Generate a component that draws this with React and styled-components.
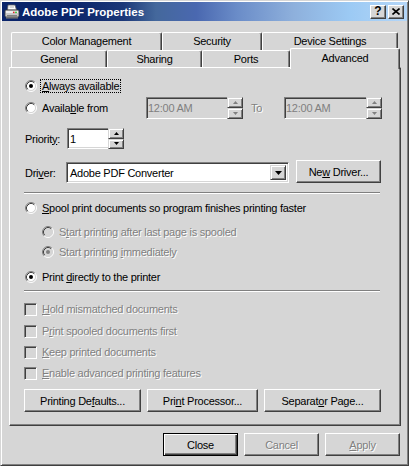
import React from "react";
import styled, { createGlobalStyle, css } from "styled-components";

const FACE = "#d6d6d6";
const LIGHT = "#ffffff";
const SHADOW = "#808080";
const DARK = "#404040";
const DIS = "#808080";

const GlobalStyle = createGlobalStyle`
  html, body { margin: 0; padding: 0; background: ${FACE}; }
  body {
    font-family: "Liberation Sans", Arial, sans-serif;
    font-size: 11px;
    letter-spacing: -0.25px;
    color: #000;
  }
  *, *::before, *::after { box-sizing: border-box; }
  u { text-underline-offset: 1px; }
`;

const Window = styled.div`
  width: 409px;
  height: 466px;
  background: ${FACE};
  border: 1px solid;
  border-color: ${FACE} ${DARK} ${DARK} ${FACE};
  box-shadow: inset 1px 1px ${LIGHT}, inset -1px -1px ${SHADOW};
  padding: 1px;
  display: flex;
  flex-direction: column;
`;

const TitleBar = styled.div`
  height: 19px;
  flex: none;
  display: flex;
  align-items: center;
  padding: 0 3px 0 2px;
  background: linear-gradient(
    to right,
    #0a246a 0%,
    #0a246a 17%,
    #1c3878 30%,
    #44689c 38%,
    #4a68b0 48%,
    #6a8cc8 58%,
    #8eb0dc 72%,
    #9ccaf4 86%,
    #b4d6f8 100%
  );
`;

const TitleText = styled.span`
  margin-left: 2px;
  color: #fff;
  font-weight: bold;
  font-size: 11.5px;
  letter-spacing: 0;
  white-space: nowrap;
`;

const CaptionButtons = styled.div`
  margin-left: auto;
  display: flex;
  gap: 2px;
`;

const CaptionButton = styled.div`
  width: 16px;
  height: 14px;
  background: ${FACE};
  border: 1px solid;
  border-color: ${LIGHT} ${DARK} ${DARK} ${LIGHT};
  box-shadow: inset -1px -1px ${SHADOW};
  display: flex;
  align-items: center;
  justify-content: center;
  font-weight: bold;
  font-size: 12px;
  letter-spacing: 0;
  line-height: 1;
  padding-bottom: 1px;
`;

const Body = styled.div`
  flex: 1;
  display: flex;
  flex-direction: column;
  padding: 11px 6px 0 7px;
`;

const TabStrip = styled.div`
  display: flex;
  flex-direction: column;
  padding-left: 2px;
`;

const TabRow = styled.div`
  display: flex;
  height: ${(p) => p.$h}px;
  flex: none;
`;

const Tab = styled.div`
  flex: none;
  width: ${(p) => p.$w}px;
  height: ${(p) => (p.$active ? 21 : p.$h)}px;
  margin-top: ${(p) => (p.$active ? -2 : 0)}px;
  background: ${FACE};
  border-top: 1px solid ${LIGHT};
  border-left: 1px solid ${LIGHT};
  border-right: 1px solid ${DARK};
  border-top-left-radius: 2px;
  border-top-right-radius: 2px;
  box-shadow: inset -1px 0 ${SHADOW};
  display: flex;
  align-items: center;
  justify-content: center;
  white-space: nowrap;
  padding-bottom: ${(p) => (p.$active ? 3 : 1)}px;
  position: relative;
  z-index: ${(p) => (p.$active ? 2 : 0)};
`;

const Panel = styled.div`
  width: 392px;
  height: 359px;
  flex: none;
  border-top: 1px solid ${LIGHT};
  border-left: 1px solid ${LIGHT};
  border-right: 1px solid ${DARK};
  border-bottom: 1px solid ${DARK};
  box-shadow: inset -1px -1px ${SHADOW};
  padding: 10px 19px 0 14px;
  display: flex;
  flex-direction: column;
`;

const Row = styled.div`
  flex: none;
  display: flex;
  align-items: ${(p) => p.$align || "center"};
  height: ${(p) => p.$h || 16}px;
  margin-top: ${(p) => p.$mt || 0}px;
  padding-left: ${(p) => p.$indent || 0}px;
  gap: ${(p) => p.$gap || 0}px;
`;

const Label = styled.span`
  flex: none;
  white-space: nowrap;
  color: ${(p) => (p.$disabled ? DIS : "#000")};
  text-shadow: ${(p) => (p.$disabled ? `1px 1px 0 ${LIGHT}` : "none")};
  ${(p) =>
    p.$width &&
    css`
      width: ${p.$width}px;
    `}
  ${(p) =>
    p.$pl &&
    css`
      padding-left: ${p.$pl}px;
    `}
  ${(p) =>
    p.$center &&
    css`
      align-self: center;
      padding-top: 2px;
    `}
`;

const FocusLabel = styled.span`
  flex: none;
  white-space: nowrap;
  margin-left: -2px;
  padding: 0 1px;
  border: 1px dotted #000;
  line-height: 12px;
`;

const RadioSvg = styled.svg`
  flex: none;
  width: 12px;
  height: 12px;
  margin: 0 5px 0 1px;
`;

const CheckBox = styled.span`
  flex: none;
  width: 13px;
  height: 13px;
  margin-right: 5px;
  background: ${FACE};
  border: 1px solid;
  border-color: ${SHADOW} ${LIGHT} ${LIGHT} ${SHADOW};
  box-shadow: inset 1px 1px ${DARK}, inset -1px -1px ${FACE};
`;

const SpinField = styled.div`
  flex: none;
  display: flex;
  width: ${(p) => p.$w}px;
  height: ${(p) => p.$h}px;
`;

const EditBox = styled.div`
  flex: 1;
  min-width: 0;
  display: flex;
  align-items: center;
  background: ${(p) => (p.$disabled ? FACE : "#fff")};
  border-top: 1px solid ${SHADOW};
  border-left: 1px solid ${SHADOW};
  border-bottom: 1px solid ${LIGHT};
  box-shadow: inset 1px 1px ${DARK}, inset 0 -1px ${FACE};
  padding-left: ${(p) => p.$pl || 2}px;
  color: ${(p) => (p.$disabled ? DIS : "#000")};
  white-space: nowrap;
`;

const Spinner = styled.div`
  flex: none;
  width: 16px;
  display: flex;
  flex-direction: column;
`;

const SpinButton = styled.div`
  flex: 1;
  background: ${FACE};
  border: 1px solid;
  border-color: ${FACE} ${DARK} ${DARK} ${FACE};
  box-shadow: inset 1px 1px ${LIGHT}, inset -1px -1px ${SHADOW};
  display: flex;
  align-items: center;
  justify-content: center;
`;

const Combo = styled.div`
  flex: none;
  width: ${(p) => p.$w}px;
  height: 21px;
  display: flex;
  background: #fff;
  border: 1px solid;
  border-color: ${SHADOW} ${LIGHT} ${LIGHT} ${SHADOW};
  box-shadow: inset 1px 1px ${DARK}, inset -1px -1px ${FACE};
  padding: 2px;
`;

const ComboText = styled.div`
  flex: 1;
  display: flex;
  align-items: center;
  padding-left: 1px;
  white-space: nowrap;
`;

const DropButton = styled.div`
  flex: none;
  width: 16px;
  background: ${FACE};
  border: 1px solid;
  border-color: ${FACE} ${DARK} ${DARK} ${FACE};
  box-shadow: inset 1px 1px ${LIGHT}, inset -1px -1px ${SHADOW};
  display: flex;
  align-items: center;
  justify-content: center;
`;

const ToLabel = styled.span`
  flex: none;
  width: 41px;
  padding-left: 8px;
  color: ${DIS};
  text-shadow: 1px 1px 0 ${LIGHT};
`;

const Separator = styled.div`
  flex: none;
  width: 356px;
  height: 2px;
  margin-top: ${(p) => p.$mt}px;
  border-top: 1px solid ${SHADOW};
  border-bottom: 1px solid ${LIGHT};
`;

const Button = styled.div`
  flex: none;
  width: ${(p) => p.$w}px;
  height: 23px;
  margin-left: ${(p) => p.$ml || 0}px;
  background: ${FACE};
  border: 1px solid;
  border-color: ${LIGHT} ${DARK} ${DARK} ${LIGHT};
  box-shadow: inset -1px -1px ${SHADOW};
  display: flex;
  align-items: center;
  justify-content: center;
  white-space: nowrap;
  color: ${(p) => (p.$disabled ? DIS : "#000")};
  text-shadow: ${(p) => (p.$disabled ? `1px 1px 0 ${LIGHT}` : "none")};
  ${(p) =>
    p.$default &&
    css`
      border-color: #000;
      box-shadow: inset 1px 1px ${LIGHT}, inset -1px -1px ${DARK},
        inset -2px -2px ${SHADOW};
    `}
`;

const ButtonRow = styled.div`
  flex: none;
  display: flex;
  justify-content: flex-end;
  gap: 6px;
  margin-top: 7px;
  padding-right: 1px;
`;

function RadioMark({ checked, disabled }) {
  return (
    <RadioSvg viewBox="0 0 12 12">
      <circle cx="6" cy="6" r="4.6" fill={disabled ? FACE : "#fff"} />
      <path d="M2.11 9.89A5.5 5.5 0 0 1 9.89 2.11" fill="none" stroke={SHADOW} />
      <path d="M9.89 2.11A5.5 5.5 0 0 1 2.11 9.89" fill="none" stroke={LIGHT} />
      <path d="M2.82 9.18A4.5 4.5 0 0 1 9.18 2.82" fill="none" stroke={DARK} />
      <path d="M9.18 2.82A4.5 4.5 0 0 1 2.82 9.18" fill="none" stroke={FACE} />
      {checked && (
        <circle cx="6" cy="6" r="2" fill={disabled ? SHADOW : "#000"} />
      )}
    </RadioSvg>
  );
}

function Arrow({ dir, color = "#000", size = "small" }) {
  if (size === "big") {
    return (
      <svg width="7" height="4" viewBox="0 0 7 4">
        <polygon points="0,0 7,0 3.5,4" fill={color} />
      </svg>
    );
  }
  return (
    <svg width="5" height="3" viewBox="0 0 5 3">
      {dir === "up" ? (
        <polygon points="2.5,0 5,3 0,3" fill={color} />
      ) : (
        <polygon points="0,0 5,0 2.5,3" fill={color} />
      )}
    </svg>
  );
}

function Spin({ disabled }) {
  const c = disabled ? SHADOW : "#000";
  return (
    <Spinner>
      <SpinButton>
        <Arrow dir="up" color={c} />
      </SpinButton>
      <SpinButton>
        <Arrow dir="down" color={c} />
      </SpinButton>
    </Spinner>
  );
}

function PrinterIcon() {
  return (
    <svg width="16" height="16" viewBox="0 0 16 16" style={{ flex: "none" }}>
      <polygon points="4,1 11,1 12.5,6 3.5,6" fill="#fff" stroke="#606060" strokeWidth="0.8" />
      <line x1="5.5" y1="3" x2="10" y2="3" stroke="#9a9a9a" strokeWidth="0.8" />
      <rect x="1" y="6" width="14" height="7" rx="1.2" fill="#c8c8c8" stroke="#404040" strokeWidth="0.8" />
      <rect x="2" y="7" width="12" height="2" fill="#eeeeee" />
      <rect x="3" y="11" width="10" height="1.5" fill="#808080" />
      <circle cx="12" cy="8.3" r="0.9" fill="#20c020" />
      <circle cx="9.8" cy="8.3" r="0.9" fill="#e02020" />
      <rect x="2" y="13" width="12" height="1.6" fill="#707070" />
    </svg>
  );
}

function CloseGlyph() {
  return (
    <svg width="8" height="7" viewBox="0 0 8 7">
      <path d="M0.5 0.5 L7.5 6.5 M7.5 0.5 L0.5 6.5" stroke="#000" strokeWidth="1.6" />
    </svg>
  );
}

export default function App() {
  return (
    <>
      <GlobalStyle />
      <Window>
        <TitleBar>
          <PrinterIcon />
          <TitleText>Adobe PDF Properties</TitleText>
          <CaptionButtons>
            <CaptionButton>?</CaptionButton>
            <CaptionButton>
              <CloseGlyph />
            </CaptionButton>
          </CaptionButtons>
        </TitleBar>

        <Body>
          <TabStrip>
            <TabRow $h={18}>
              <Tab $w={151} $h={18}>Color Management</Tab>
              <Tab $w={100} $h={18}>Security</Tab>
              <Tab $w={136} $h={18}>Device Settings</Tab>
            </TabRow>
            <TabRow $h={17}>
              <Tab $w={96} $h={17}>General</Tab>
              <Tab $w={95} $h={17}>Sharing</Tab>
              <Tab $w={88} $h={17}>Ports</Tab>
              <Tab $w={110} $h={17} $active>
                Advanced
              </Tab>
            </TabRow>
          </TabStrip>

          <Panel>
            <Row>
              <RadioMark checked />
              <FocusLabel>
                <u>A</u>lways available
              </FocusLabel>
            </Row>

            <Row $h={22} $mt={3}>
              <RadioMark />
              <Label $width={104}>
                Availa<u>b</u>le from
              </Label>
              <SpinField $w={97} $h={22}>
                <EditBox $disabled $pl={1}>12:00 AM</EditBox>
                <Spin disabled />
              </SpinField>
              <ToLabel>To</ToLabel>
              <SpinField $w={98} $h={22}>
                <EditBox $disabled $pl={1}>12:00 AM</EditBox>
                <Spin disabled />
              </SpinField>
            </Row>

            <Row $h={21} $mt={9}>
              <Label $width={43} $pl={1}>
                Priorit<u>y</u>:
              </Label>
              <SpinField $w={57} $h={21}>
                <EditBox>1</EditBox>
                <Spin />
              </SpinField>
            </Row>

            <Row $h={23} $mt={11} $align="flex-end">
              <Label $width={42} $pl={1} $center>
                Dri<u>v</u>er:
              </Label>
              <Combo $w={223}>
                <ComboText>Adobe PDF Converter</ComboText>
                <DropButton>
                  <Arrow size="big" />
                </DropButton>
              </Combo>
              <Button $w={85} $ml={7}>
                Ne<u>w</u>&nbsp;Driver...
              </Button>
            </Row>

            <Separator $mt={9} />

            <Row $mt={6}>
              <RadioMark />
              <Label>
                <u>S</u>pool print documents so program finishes printing faster
              </Label>
            </Row>
            <Row $mt={8} $indent={17}>
              <RadioMark disabled />
              <Label $disabled>
                S<u>t</u>art printing after last page is spooled
              </Label>
            </Row>
            <Row $mt={4} $indent={17}>
              <RadioMark checked disabled />
              <Label $disabled>
                Start printing <u>i</u>mmediately
              </Label>
            </Row>
            <Row $mt={9}>
              <RadioMark checked />
              <Label>
                Print <u>d</u>irectly to the printer
              </Label>
            </Row>

            <Separator $mt={5} />

            <Row $mt={9}>
              <CheckBox />
              <Label $disabled>
                <u>H</u>old mismatched documents
              </Label>
            </Row>
            <Row $mt={6}>
              <CheckBox />
              <Label $disabled>
                P<u>r</u>int spooled documents first
              </Label>
            </Row>
            <Row $mt={5}>
              <CheckBox />
              <Label $disabled>
                <u>K</u>eep printed documents
              </Label>
            </Row>
            <Row $mt={5}>
              <CheckBox />
              <Label $disabled>
                <u>E</u>nable advanced printing features
              </Label>
            </Row>

            <Row $h={23} $mt={8} $gap={6}>
              <Button $w={117}>
                Printing De<u>f</u>aults...
              </Button>
              <Button $w={111}>
                Pri<u>n</u>t Processor...
              </Button>
              <Button $w={117}>
                Separat<u>o</u>r Page...
              </Button>
            </Row>
          </Panel>

          <ButtonRow>
            <Button $w={75} $default>
              Close
            </Button>
            <Button $w={75} $disabled>
              Cancel
            </Button>
            <Button $w={75} $disabled>
              <u>A</u>pply
            </Button>
          </ButtonRow>
        </Body>
      </Window>
    </>
  );
}
